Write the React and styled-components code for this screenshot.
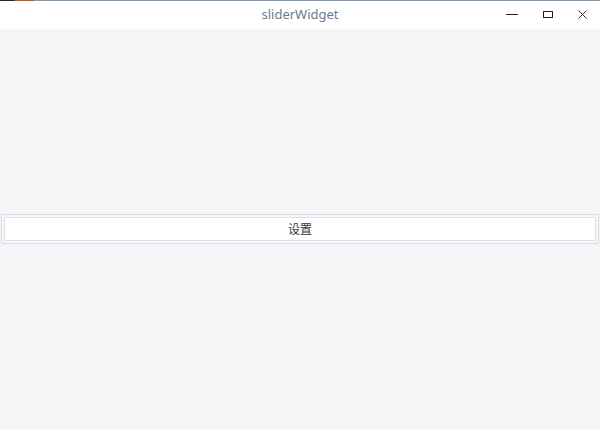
import styled, { createGlobalStyle } from "styled-components";

const GlobalStyle = createGlobalStyle`
  html, body {
    margin: 0;
    padding: 0;
    background: #f4f5f7;
  }
  body {
    font-family: "Noto Sans", "Noto Sans CJK SC", sans-serif;
  }
`;

const Window = styled.div`
  width: 600px;
  height: 429px;
  display: flex;
  flex-direction: column;
  background: #f4f5f7;
  overflow: hidden;
`;

const TitleBar = styled.div`
  position: relative;
  height: 29px;
  flex-shrink: 0;
  background: #ffffff;
  border-top: 1px solid #7d9dbd;
  box-sizing: border-box;
  display: flex;
  align-items: center;
  justify-content: center;
`;

const Accent = styled.div`
  position: absolute;
  top: -1px;
  left: 0;
  height: 1px;
  width: 34px;
  background: linear-gradient(to right, #2a2320 0, #2a2320 14px, #c8530c 15px, #c8530c 34px);
`;

const Title = styled.span`
  font-size: 13px;
  color: #6c7a92;
  line-height: 1;
  margin-top: -1px;
`;

const Controls = styled.div`
  position: absolute;
  right: 0;
  top: -1px;
  height: 29px;
  display: flex;
`;

const ControlButton = styled.div`
  width: 35px;
  height: 29px;
  position: relative;
`;

const Icon = styled.svg`
  position: absolute;
  left: ${(p) => p.$left}px;
  top: ${(p) => p.$top}px;
`;

const Body = styled.div`
  flex: 1;
  display: flex;
  flex-direction: column;
  justify-content: center;
  padding: 0 1px 1px 1px;
`;

const Group = styled.div`
  border: 1px solid #d6dae6;
  border-radius: 2px;
  padding: 2px;
  background: #f7f8fa;
`;

const Button = styled.button`
  display: block;
  width: 100%;
  height: 24px;
  margin: 0;
  padding: 0;
  background: #ffffff;
  border: 1px solid #dcdfe8;
  border-radius: 1px;
  font-family: "Noto Sans CJK SC", "Noto Sans", sans-serif;
  font-size: 12px;
  color: #333333;
  cursor: pointer;
`;

export default function App() {
  return (
    <>
      <GlobalStyle />
      <Window>
        <TitleBar>
          <Accent />
          <Title>sliderWidget</Title>
          <Controls>
            <ControlButton>
              <Icon $left={11} $top={8} width="13" height="13" viewBox="0 0 13 13">
                <path d="M0 6.5h12" stroke="#222" strokeWidth="1" />
              </Icon>
            </ControlButton>
            <ControlButton>
              <Icon $left={12} $top={8} width="12" height="12" viewBox="0 0 12 12">
                <rect x="1.5" y="3.5" width="9" height="6" fill="none" stroke="#222" strokeWidth="1" />
              </Icon>
            </ControlButton>
            <ControlButton>
              <Icon $left={12} $top={8} width="12" height="12" viewBox="0 0 12 12">
                <path d="M1.5 2.5l8 8M9.5 2.5l-8 8" stroke="#333" strokeWidth="1" />
              </Icon>
            </ControlButton>
          </Controls>
        </TitleBar>
        <Body>
          <Group>
            <Button>设置</Button>
          </Group>
        </Body>
      </Window>
    </>
  );
}
